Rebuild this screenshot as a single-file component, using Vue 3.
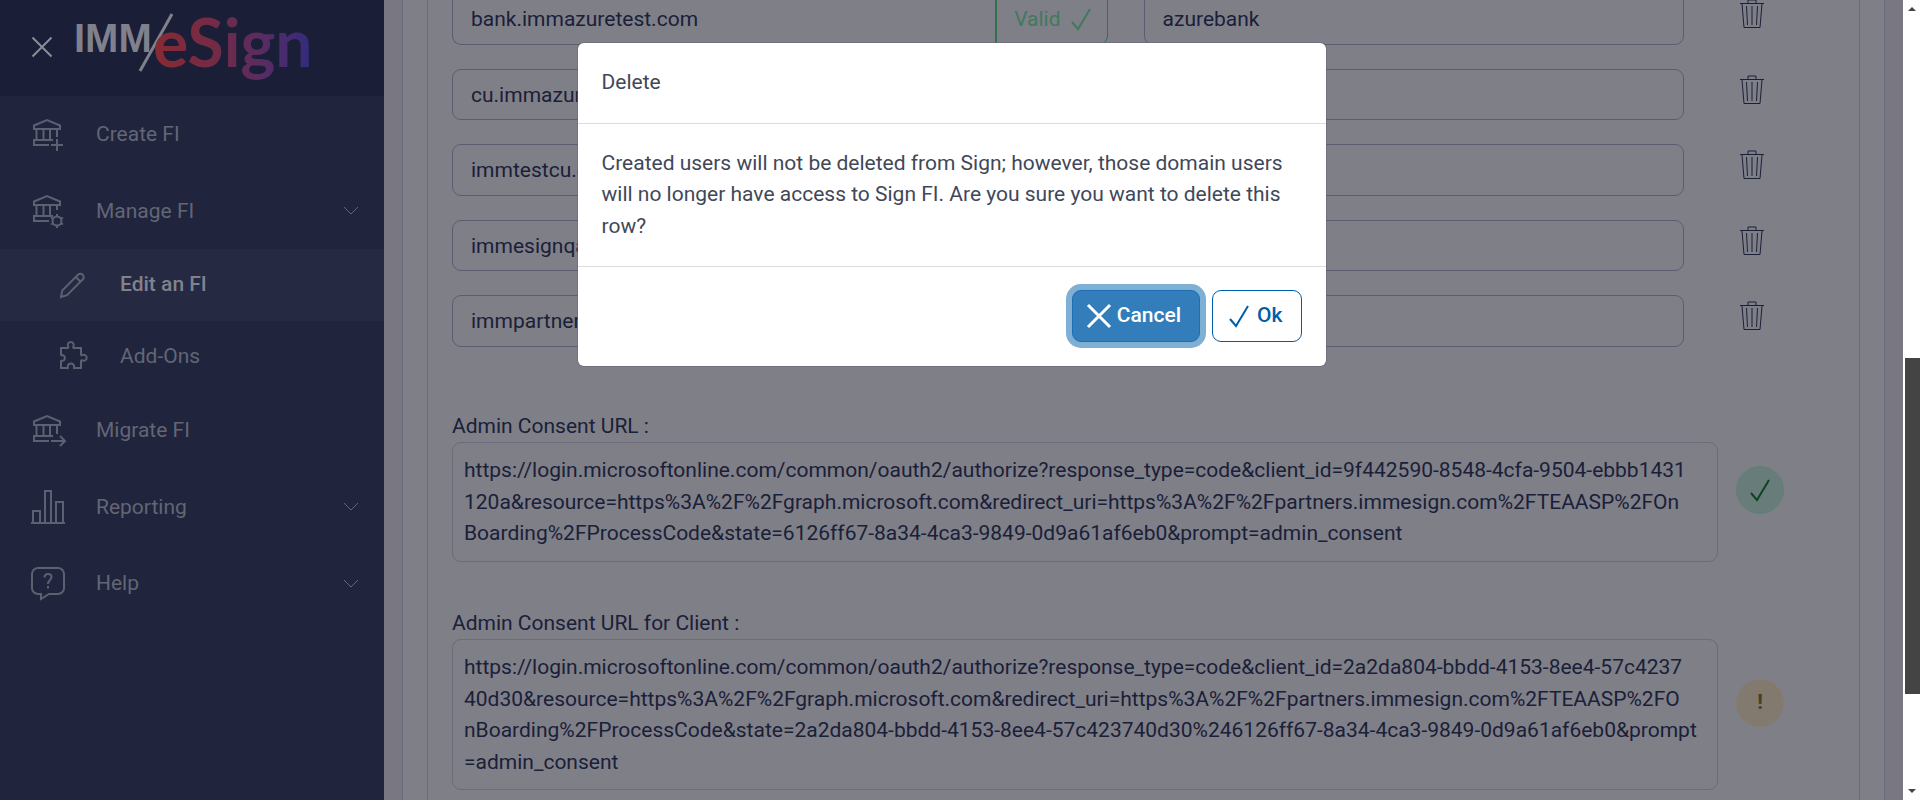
<script setup>
import { ref } from 'vue'

const rows = ref([
  { domain: 'bank.immazuretest.com', name: 'azurebank', valid: true },
  { domain: 'cu.immazuretest.com', name: '' },
  { domain: 'immtestcu.com', name: '' },
  { domain: 'immesignqa.com', name: '' },
  { domain: 'immpartner.com', name: '' }
])

const menu = [
  { label: 'Create FI', icon: 'bank-plus' },
  { label: 'Manage FI', icon: 'bank-gear', expandable: true },
  { label: 'Edit an FI', icon: 'pencil', sub: true, active: true },
  { label: 'Add-Ons', icon: 'puzzle', sub: true },
  { label: 'Migrate FI', icon: 'bank-arrow' },
  { label: 'Reporting', icon: 'bars', expandable: true },
  { label: 'Help', icon: 'help', expandable: true }
]

const consents = [
  {
    id: 'consent',
    label: 'Admin Consent URL :',
    ok: true,
    lines: [
      'https://login.microsoftonline.com/common/oauth2/authorize?response_type=code&client_id=9f442590-8548-4cfa-9504-ebbb1431',
      '120a&resource=https%3A%2F%2Fgraph.microsoft.com&redirect_uri=https%3A%2F%2Fpartners.immesign.com%2FTEAASP%2FOn',
      'Boarding%2FProcessCode&state=6126ff67-8a34-4ca3-9849-0d9a61af6eb0&prompt=admin_consent'
    ]
  },
  {
    id: 'consent-client',
    label: 'Admin Consent URL for Client :',
    ok: false,
    lines: [
      'https://login.microsoftonline.com/common/oauth2/authorize?response_type=code&client_id=2a2da804-bbdd-4153-8ee4-57c4237',
      '40d30&resource=https%3A%2F%2Fgraph.microsoft.com&redirect_uri=https%3A%2F%2Fpartners.immesign.com%2FTEAASP%2FO',
      'nBoarding%2FProcessCode&state=2a2da804-bbdd-4153-8ee4-57c423740d30%246126ff67-8a34-4ca3-9849-0d9a61af6eb0&prompt',
      '=admin_consent'
    ]
  }
]
</script>

<template>
  <div class="app">
    <aside class="sidebar">
      <header class="brand">
        <button class="close" type="button" aria-label="Close menu">
          <svg width="20" height="20" viewBox="0 0 20 20"><path d="M.5.5l19 19M19.5.5l-19 19" /></svg>
        </button>
        <svg class="logo" width="234" height="80" viewBox="0 0 234 80" role="img" aria-label="IMM eSign">
          <defs>
            <linearGradient id="brandFill" gradientUnits="userSpaceOnUse" x1="82" y1="40" x2="232" y2="40">
              <stop offset="0" stop-color="#862a35" />
              <stop offset="0.35" stop-color="#742b44" />
              <stop offset="0.7" stop-color="#582c62" />
              <stop offset="1" stop-color="#352b7c" />
            </linearGradient>
          </defs>
          <text class="logo-imm" x="-2" y="45">IMM</text>
          <path class="logo-slash" d="M96 7L64 64" />
          <text class="logo-esign" x="77" y="60">eSign</text>
        </svg>
      </header>

      <nav>
        <a
          v-for="item in menu"
          :key="item.label"
          href="#"
          class="item"
          :class="{ sub: item.sub, active: item.active }"
        >
          <span class="item-icon">
            <svg v-if="item.icon.startsWith('bank')" class="bank" width="34" height="34" viewBox="0 0 34 34">
              <path d="M3 11V7.500L16 2l13 5.500V11zM5.500 11v11M12.500 11v11M19 11v11M22 22H3v5h15" />
              <path v-if="item.icon === 'bank-plus'" d="M26 11v8M26 21v12M20 27h12" />
              <path v-if="item.icon === 'bank-arrow'" d="M26 11v9M20 27h14M29 22l5 5-5 5" />
              <template v-if="item.icon === 'bank-gear'">
                <path d="M26 11v5" />
                <circle cx="26" cy="27" r="4.500" />
                <path d="M26 20v3M26 31v3M20 23.500l2.500 1.500M29.500 29l2.500 1.500M20 30.500l2.500-1.500M29.500 25l2.500-1.500" />
              </template>
            </svg>
            <svg v-else-if="item.icon === 'pencil'" width="26" height="26" viewBox="0 0 26 26">
              <path d="M2 25l1.200-6.500L19 2.800a3.300 3.300 0 0 1 4.700 4.700L8 23.200zM16.800 5l4.700 4.700" />
            </svg>
            <svg v-else-if="item.icon === 'puzzle'" width="28" height="28" viewBox="0 0 28 28">
              <path d="M2 6h6.500c1 0 1-.8.500-1.800a3 3 0 1 1 5.500 0c-.5 1-.5 1.800.5 1.800h7v6.500c0 1 .8 1 1.500.5a3 3 0 1 1 0 5.500c-1-.5-1.500-.3-1.500.6V26h-7v-2a3.200 3.200 0 0 0-6.200 0v2H2v-6.500c0-1 .8-.8 1.600-.6a3 3 0 0 0 0-5.800C2.800 13.300 2 13.500 2 12.500z" />
            </svg>
            <svg v-else-if="item.icon === 'bars'" width="34" height="34" viewBox="0 0 34 34">
              <path d="M0 33h34M2 33V21h7v12M14 33V1h6v32M25 33V12h7v21" />
            </svg>
            <svg v-else width="34" height="34" viewBox="0 0 34 34">
              <path d="M7 1h20a6 6 0 0 1 6 6v14a6 6 0 0 1-6 6h-9l-8 5v-5H7a6 6 0 0 1-6-6V7a6 6 0 0 1 6-6z" />
              <path d="M13.500 10.500c0-5 7-4.500 7-.5 0 3-3.500 3-3.500 7M17 19v2.500" />
            </svg>
          </span>
          <span class="item-label">{{ item.label }}</span>
          <svg v-if="item.expandable" class="chevron" width="16" height="10" viewBox="0 0 16 10">
            <path d="M1 1l7 7 7-7" />
          </svg>
        </a>
      </nav>
    </aside>

    <main class="page">
      <div class="outer-card">
        <div class="inner-card">
          <div class="rows">
            <div v-for="(row, i) in rows" :key="i" class="row">
              <div class="domain" :class="{ grouped: row.valid }">
                <input v-model="row.domain" class="field" type="text" :aria-label="'Domain ' + (i + 1)" />
                <span v-if="row.valid" class="valid">
                  Valid
                  <svg width="20" height="22" viewBox="0 0 20 22"><path d="M1 14l6 7L19 1" /></svg>
                </span>
              </div>
              <input v-model="row.name" class="field" type="text" :aria-label="'Name ' + (i + 1)" />
              <button class="trash" type="button" aria-label="Delete row">
                <svg width="24" height="30" viewBox="0 0 24 30">
                  <path d="M0 4.500h24M8 4V1h8v3M2 5l2 23.500h16L22 5M6.500 7l1 19M12 7v19M17.500 7l-1 19" />
                </svg>
              </button>
            </div>
          </div>

          <div v-for="c in consents" :key="c.id" class="consent">
            <div class="consent-main">
              <label :for="c.id">{{ c.label }}</label>
              <textarea :id="c.id" :rows="c.lines.length" :value="c.lines.join('\n')" readonly></textarea>
            </div>
            <span class="status" :class="c.ok ? 'ok' : 'warn'">
              <svg v-if="c.ok" width="20" height="22" viewBox="0 0 20 22"><path d="M1 14l6 7L19 1" /></svg>
              <template v-else>!</template>
            </span>
          </div>
        </div>
      </div>
    </main>

    <div class="scrollbar" aria-hidden="true">
      <svg width="8" height="4" viewBox="0 0 8 4"><path d="M0 4l4-4 4 4z" /></svg>
      <div class="track"><div class="thumb"></div></div>
      <svg width="8" height="4" viewBox="0 0 8 4"><path d="M0 0l4 4 4-4z" /></svg>
    </div>

    <div class="overlay">
      <section class="modal" role="dialog" aria-modal="true" aria-labelledby="dialog-title">
        <h2 id="dialog-title">Delete</h2>
        <p>
          Created users will not be deleted from Sign; however, those domain users will no longer
          have access to Sign FI. Are you sure you want to delete this row?
        </p>
        <footer>
          <button class="btn cancel" type="button">
            <svg width="24" height="24" viewBox="0 0 24 24"><path d="M1 1l22 22M23 1L1 23" /></svg>
            Cancel
          </button>
          <button class="btn ok-btn" type="button">
            <svg width="20" height="22" viewBox="0 0 20 22"><path d="M1 14l6 7L19 1" /></svg>
            Ok
          </button>
        </footer>
      </section>
    </div>
  </div>
</template>

<style>
body {
  overflow: hidden;
}
</style>

<style scoped>
.app {
  position: relative;
  display: flex;
  height: 100vh;
  overflow: hidden;
  background: #787782;
  color: #1a2038;
  font-family: Roboto, "Liberation Sans", sans-serif;
  font-size: 21px;
  line-height: 1.5;
}

.app *,
.app *::before {
  box-sizing: border-box;
}

svg {
  flex: none;
  fill: none;
  stroke: currentColor;
  overflow: visible;
}

button,
input,
textarea {
  font: inherit;
  color: inherit;
}

.sidebar {
  flex: none;
  width: 384px;
  background: #20243d;
  color: #626675;
}

.brand {
  display: flex;
  align-items: center;
  gap: 24px;
  height: 96px;
  padding: 0 0 2px 32px;
  background: #1a1e36;
}

.close {
  display: flex;
  padding: 0;
  border: 0;
  background: none;
  color: #8c8d98;
}

.close svg {
  stroke-width: 2;
}

.logo-imm {
  font-family: "Liberation Sans", sans-serif;
  font-size: 40px;
  font-weight: 700;
  fill: #80818c;
  stroke: none;
}

.logo-slash {
  stroke: #80818c;
  stroke-width: 3;
}

.logo-esign {
  font-family: Lato, sans-serif;
  font-size: 66px;
  font-weight: 700;
  fill: url(#brandFill);
  stroke: none;
}

.item {
  display: flex;
  align-items: center;
  padding: 23px 25px 22px 31px;
  color: inherit;
  text-decoration: none;
}

.item.sub {
  padding: 20px 25px 20px 59px;
}

.item.active {
  background: #252942;
  color: #80828f;
  font-weight: 500;
}

.item-icon {
  display: flex;
  align-items: center;
  width: 65px;
  height: 30px;
  color: #5c6070;
}

.item.sub .item-icon {
  width: 61px;
}

.item-icon svg {
  stroke-width: 2;
}

.item-label {
  flex: 1;
}

.page {
  flex: 1;
  min-width: 0;
  padding: 0 18px;
}

.outer-card {
  min-height: 100%;
  padding: 0 24px;
  border: solid #6b6b79;
  border-width: 0 1px;
  background: #7f7f88;
}

.inner-card {
  display: flow-root;
  min-height: 100vh;
  padding: 0 75px 0 24px;
  border: solid #6b6b79;
  border-width: 0 1px;
}

.rows {
  display: grid;
  gap: 24px;
  margin: -7px 0 64px;
}

.row {
  display: grid;
  grid-template-columns: minmax(0, 655fr) minmax(0, 540fr) 64px;
  column-gap: 36px;
}

.domain {
  display: flex;
}

.field {
  width: 100%;
  min-width: 0;
  padding: 10px 18px 8px;
  border: 1px solid #5c5c70;
  border-radius: 9px;
  outline: 0;
  background: transparent;
  line-height: 1.5;
}

.grouped .field {
  border-right: 0;
  border-radius: 9px 0 0 9px;
}

.valid {
  flex: none;
  display: flex;
  align-items: center;
  gap: 10px;
  padding: 1px 16px 0 17px;
  border: 1px solid #33704f;
  border-left-width: 2px;
  border-radius: 0 9px 9px 0;
  color: #3f7a5c;
}

.valid svg {
  stroke-width: 2;
}

.trash {
  align-self: start;
  display: flex;
  justify-content: center;
  padding: 6px 0;
  border: 0;
  background: none;
}

.trash svg {
  stroke-width: 1;
}

.consent {
  display: flex;
  align-items: center;
  gap: 18px;
  margin-bottom: 46px;
}

.consent-main {
  flex: 1;
  min-width: 0;
}

.consent label {
  display: block;
}

.consent textarea {
  display: block;
  width: 100%;
  padding: 12px 11px 11px;
  border: 1px solid #6b6b7b;
  border-radius: 9px;
  outline: 0;
  background: transparent;
  line-height: 1.5;
  resize: none;
  overflow: hidden;
  word-break: break-all;
}

.status {
  display: flex;
  align-items: center;
  justify-content: center;
  width: 48px;
  height: 48px;
  margin-top: 8px;
  border-radius: 50%;
  font-weight: 700;
}

.status.ok {
  border: 1px solid #62806f;
  background: #687d79;
  color: #0d4327;
}

.status.ok svg {
  stroke-width: 2;
}

.status.warn {
  border: 1px solid #8b7a68;
  background: #82796f;
  color: #4d3b22;
}

.scrollbar {
  flex: none;
  display: flex;
  flex-direction: column;
  align-items: center;
  width: 17px;
  padding: 7px 0;
  background: #fff;
}

.scrollbar svg {
  fill: #444;
  stroke: none;
}

.track {
  flex: 1;
  align-self: stretch;
  padding: 347px 0 0 2px;
}

.thumb {
  height: 336px;
  background: #444;
}

.overlay {
  position: absolute;
  inset: 0 17px 0 0;
  display: flex;
  align-items: flex-start;
  justify-content: center;
  padding-top: 43px;
}

.modal {
  width: 748px;
  border-radius: 6px;
  background: #fff;
  box-shadow: 0 0 0 1px #66667580;
  color: #3f4858;
}

.modal h2 {
  margin: 0;
  padding: 24px;
  font-size: 21px;
  font-weight: 400;
}

.modal p {
  margin: 0;
  padding: 24px;
  border: solid #dcdcde;
  border-width: 1px 0;
}

.modal footer {
  display: flex;
  justify-content: flex-end;
  gap: 12px;
  padding: 23px 24px 24px;
}

.btn {
  display: flex;
  align-items: center;
  height: 52px;
  border: 1px solid #005eaa;
  border-radius: 9px;
  font-weight: 500;
}

.btn svg {
  stroke-width: 2;
}

.cancel {
  gap: 6px;
  padding: 0 18px 0 14px;
  border-color: #1a6fb5;
  background: #337eba;
  box-shadow: 0 0 0 6px #80afd4;
  color: #fff;
}

.cancel svg {
  stroke-width: 3;
}

.ok-btn {
  gap: 8px;
  padding: 0 18px 0 16px;
  background: #fff;
  color: #005eaa;
}
</style>
